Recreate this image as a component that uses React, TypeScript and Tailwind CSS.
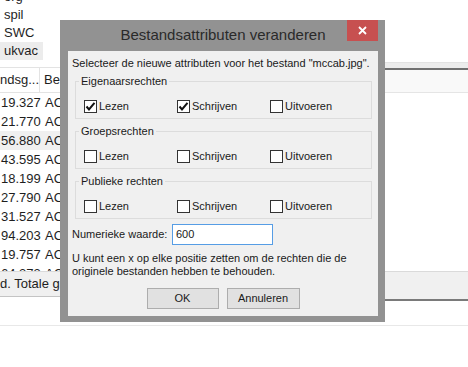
import { type ReactNode } from 'react';

const font = { fontFamily: '"Liberation Sans", Arial, sans-serif' };

const listItems = ['org', 'spil', 'SWC', 'ukvac'];
const sizes = ['19.327', '21.770', '56.880', '43.595', '18.199', '27.790', '31.527', '94.203', '19.757', '64.373'];

const CheckBox = ({ checked, label }: { checked?: boolean; label: string }) => (
  <div className="flex w-[93px] items-center gap-[2px]">
    <span className="flex h-[13px] w-[13px] items-center justify-center border border-[#333333] bg-white">
      {checked && (
        <svg width="11" height="11" viewBox="0 0 11 11">
          <path d="M1.5 5.5 L4 8.5 L9.5 1.8" fill="none" stroke="#111" strokeWidth="2" />
        </svg>
      )}
    </span>
    <span>{label}</span>
  </div>
);

const GroupBox = ({ title, children, className = '' }: { title: string; children: ReactNode; className?: string }) => (
  <div className={`relative ml-[7px] mr-[6px] h-[38px] border border-[#dcdcdc] pl-[8px] pt-[16px] ${className}`}>
    <span className="absolute left-[3px] top-[-8px] bg-[#f0f0f0] px-[2px] leading-[15px]">{title}</span>
    <div className="flex">{children}</div>
  </div>
);

const Dialog = () => (
  <div className="absolute left-[60px] top-[20px] flex h-[302px] w-[325px] flex-col bg-[#929292] px-[7px] pb-[6px] pl-[8px]">
    <div className="relative flex h-[31px] shrink-0 items-center justify-center">
      <span className="text-[15px] text-[#2a2a2a]">Bestandsattributen veranderen</span>
      <div className="absolute right-0 top-0 flex h-[21px] w-[31px] items-center justify-center bg-[#c75050]">
        <svg width="9" height="9" viewBox="0 0 9 9">
          <path d="M1 1 L8 8 M8 1 L1 8" stroke="#fff" strokeWidth="1.8" />
        </svg>
      </div>
    </div>
    <div className="flex flex-1 flex-col whitespace-nowrap bg-[#f0f0f0] text-[11px] text-[#1a1a1a]">
      <p className="ml-[4px] mt-[5px] leading-[14px]">Selecteer de nieuwe attributen voor het bestand "mccab.jpg".</p>
      <GroupBox title="Eigenaarsrechten" className="mt-[11px]">
        <CheckBox checked label="Lezen" />
        <CheckBox checked label="Schrijven" />
        <CheckBox label="Uitvoeren" />
      </GroupBox>
      <GroupBox title="Groepsrechten" className="mt-[12px]">
        <CheckBox label="Lezen" />
        <CheckBox label="Schrijven" />
        <CheckBox label="Uitvoeren" />
      </GroupBox>
      <GroupBox title="Publieke rechten" className="mt-[12px]">
        <CheckBox label="Lezen" />
        <CheckBox label="Schrijven" />
        <CheckBox label="Uitvoeren" />
      </GroupBox>
      <div className="ml-[4px] mt-[5px] flex items-center">
        <span className="w-[100px]">Numerieke waarde:</span>
        <div className="flex h-[21px] w-[101px] items-center border border-[#569de5] bg-white pl-[3px]">600</div>
      </div>
      <p className="ml-[4px] mt-[7px] leading-[13px]">
        U kunt een x op elke positie zetten om de rechten die de
        <br />
        originele bestanden hebben te behouden.
      </p>
      <div className="mt-[10px] flex justify-center gap-[8px]">
        <div className="flex h-[21px] w-[72px] items-center justify-center border border-[#adadad] bg-[#e1e1e1]">OK</div>
        <div className="flex h-[21px] w-[73px] items-center justify-center border border-[#adadad] bg-[#e1e1e1]">Annuleren</div>
      </div>
    </div>
  </div>
);

export default function App() {
  return (
    <div className="relative h-[367px] w-[468px] overflow-hidden bg-white text-[12px] text-[#1e1e1e]" style={font}>
      <div className="flex h-full">
        {/* linker paneel: lijst + tabel */}
        <div className="flex w-[220px] shrink-0 flex-col">
          <div className="mt-[-12px] flex flex-col">
            {listItems.map((item) => (
              <div
                key={item}
                className={`flex h-[18px] w-fit items-center pl-[4px] pr-[5px] text-[13px] ${item === 'ukvac' ? 'bg-[#ececec]' : ''}`}
              >
                {item}
              </div>
            ))}
          </div>
          <div className="mt-[7px] flex h-[26px] border-b border-t border-[#e3e3e3]">
            <div className="flex w-[40px] items-center border-r border-[#e3e3e3] text-[13px]">ndsg...</div>
            <div className="flex items-center pl-[4px] text-[13px]">Bestandsnaam</div>
          </div>
          <div className="flex h-[178px] flex-col overflow-hidden text-[13px]">
            {sizes.map((s) => (
              <div key={s} className={`flex h-[19px] shrink-0 items-center ${s === '56.880' ? 'bg-[#f0f0f0]' : ''}`}>
                <span className="w-[45px] pl-[1px]">{s}</span>
                <span>ACS</span>
              </div>
            ))}
          </div>
          <div className="flex h-[26px] items-center border-b border-t border-b-[#c4c4c4] border-t-[#dadada] bg-[#f0f0f0] text-[13px]">
            d. Totale grootte: 1.204 KB
          </div>
          <div className="mt-[28px] border-t border-[#e8e8e8]" />
        </div>
        {/* rechter paneel */}
        <div className="flex flex-1 flex-col">
          <div className="mt-[62px] h-[6px] border-t border-[#e2e2e2] bg-[#ececec]" />
          <div className="h-[2px] bg-[#707070]" />
          <div className="h-[23px] border-b border-[#e5e5e5] bg-[#f9f9f9]" />
          <div className="h-[178px]" />
          <div className="h-[28px] border-t border-[#dadada] bg-[#f0f0f0]" />
          <div className="h-[2px] bg-[#7a7a7a]" />
          <div className="mt-[24px] border-t border-[#e8e8e8]" />
        </div>
      </div>
      <Dialog />
    </div>
  );
}
